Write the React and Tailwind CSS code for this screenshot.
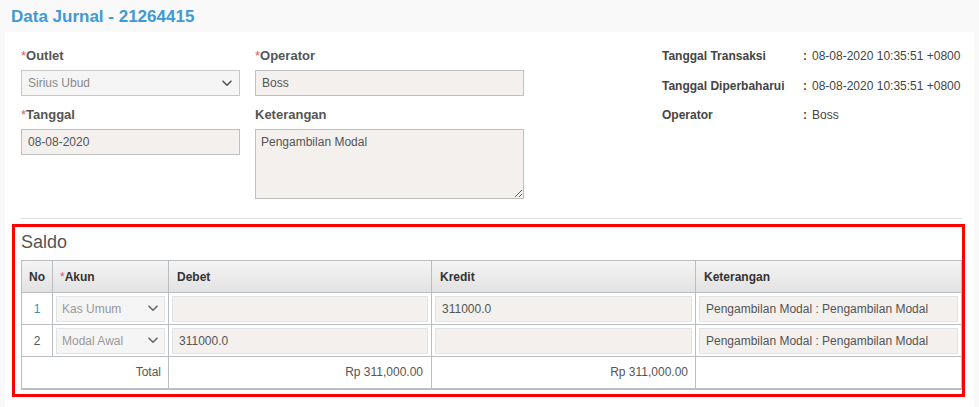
import React from "react";

const Chevron = ({ color = "#555" }) => (
  <svg width="10" height="7" viewBox="0 0 10 7" className="shrink-0">
    <path d="M1 1.2 L5 5.2 L9 1.2" fill="none" stroke={color} strokeWidth="1.6" strokeLinecap="round" strokeLinejoin="round" />
  </svg>
);

const Req = () => <span className="text-[#e05a5a] font-normal">*</span>;

function Label({ children }) {
  return <div className="h-[18px] leading-[18px] text-[13px] font-bold text-[#555] mb-[5px]">{children}</div>;
}

function TableSelect({ value }) {
  return (
    <div className="h-[26px] border border-[#e3e3e3] bg-[#f5f5f5] flex items-center justify-between pl-[5px] pr-[6px] text-[12px] text-[#999]">
      <span>{value}</span>
      <Chevron color="#666" />
    </div>
  );
}

function TableInput({ value }) {
  return (
    <div className="h-[26px] border border-[#e3e3e3] bg-[#f3f0ed] flex items-center px-[6px] text-[12px] text-[#555] whitespace-nowrap overflow-hidden">
      {value}
    </div>
  );
}

export default function App() {
  const rows = [
    { no: "1", noColor: "text-[#3b8ac4]", akun: "Kas Umum", debet: "", kredit: "311000.0" },
    { no: "2", noColor: "text-[#555]", akun: "Modal Awal", debet: "311000.0", kredit: "" },
  ];
  return (
    <div className="w-[979px] h-[407px] bg-[#f9f9f9] overflow-hidden" style={{ fontFamily: '"Liberation Sans", Arial, sans-serif' }}>
      <div className="h-[32px] pl-[11px] flex items-center">
        <h1 className="text-[17px] font-bold text-[#3d9ad6] leading-none pt-[1px]">Data Jurnal - 21264415</h1>
      </div>
      <div className="mx-[5px] bg-white h-[375px] pt-[15px]">
        <div className="flex pl-[16px]">
          <div className="w-[219px]">
            <Label><Req />Outlet</Label>
            <div className="h-[26px] border border-[#c8c8c8] bg-[#f5f5f5] flex items-center justify-between pl-[6px] pr-[7px] text-[12px] text-[#8a8a8a]">
              <span>Sirius Ubud</span>
              <Chevron color="#555" />
            </div>
            <div className="mt-[10px]">
              <Label><Req />Tanggal</Label>
              <div className="h-[26px] border border-[#c0c0c0] bg-[#f3f0ed] flex items-center px-[6px] text-[12px] text-[#555]">08-08-2020</div>
            </div>
          </div>
          <div className="w-[269px] ml-[15px]">
            <Label><Req />Operator</Label>
            <div className="h-[26px] border border-[#c0c0c0] bg-[#f3f0ed] flex items-center px-[6px] text-[12px] text-[#555]">Boss</div>
            <div className="mt-[10px]">
              <Label>Keterangan</Label>
              <textarea
                readOnly
                defaultValue="Pengambilan Modal"
                className="block w-[269px] h-[70px] border border-[#c0c0c0] bg-[#f3f0ed] px-[5px] py-[5px] text-[12px] leading-[15px] text-[#555] outline-none"
                style={{ fontFamily: '"Liberation Sans", Arial, sans-serif' }}
              />
            </div>
          </div>
          <div className="ml-[138px] text-[12px] text-[#444]">
            <div className="flex h-[18px] items-center">
              <div className="w-[141px] font-bold">Tanggal Transaksi</div>
              <div className="w-[9px] font-bold">:</div>
              <div>08-08-2020 10:35:51 +0800</div>
            </div>
            <div className="flex h-[18px] items-center mt-[12px]">
              <div className="w-[141px] font-bold">Tanggal Diperbaharui</div>
              <div className="w-[9px] font-bold">:</div>
              <div>08-08-2020 10:35:51 +0800</div>
            </div>
            <div className="flex h-[18px] items-center mt-[11px]">
              <div className="w-[141px] font-bold">Operator</div>
              <div className="w-[9px] font-bold">:</div>
              <div>Boss</div>
            </div>
          </div>
        </div>
        <div className="ml-[16px] w-[941px] h-px bg-[#dddddd] mt-[19px]" />
        <div className="ml-[7px] mt-[5px] w-[953px] border-[3px] border-[#ff0000] pl-[6px] pr-[1px] pb-[4px]">
          <div className="h-[33px] pt-[4px] text-[18px] leading-[22px] text-[#555]">Saldo</div>
          <table className="w-[940px] border-collapse table-fixed text-[12px] border-b-2 border-b-[#b9bec3]">
            <colgroup>
              <col className="w-[31px]" />
              <col className="w-[116px]" />
              <col className="w-[263px]" />
              <col className="w-[264px]" />
              <col className="w-[266px]" />
            </colgroup>
            <thead>
              <tr className="h-[32px] bg-gradient-to-b from-[#f4f4f4] to-[#e2e2e2] text-[#333] font-bold">
                <th className="border border-[#b9bec3] text-center font-bold">No</th>
                <th className="border border-[#b9bec3] text-left pl-[7px] font-bold"><Req />Akun</th>
                <th className="border border-[#b9bec3] text-left pl-[8px] font-bold">Debet</th>
                <th className="border border-[#b9bec3] text-left pl-[8px] font-bold">Kredit</th>
                <th className="border border-[#b9bec3] text-left pl-[8px] font-bold">Keterangan</th>
              </tr>
            </thead>
            <tbody>
              {rows.map((r) => (
                <tr key={r.no} className="h-[32px]">
                  <td className={`border border-[#b9bec3] text-center ${r.noColor}`}>{r.no}</td>
                  <td className="border border-[#b9bec3] px-[3px]"><TableSelect value={r.akun} /></td>
                  <td className="border border-[#b9bec3] px-[3px]"><TableInput value={r.debet} /></td>
                  <td className="border border-[#b9bec3] px-[3px]"><TableInput value={r.kredit} /></td>
                  <td className="border border-[#b9bec3] px-[3px]"><TableInput value="Pengambilan Modal : Pengambilan Modal" /></td>
                </tr>
              ))}
              <tr className="h-[32px] text-[#555]">
                <td colSpan={2} className="border border-[#b9bec3] text-right pr-[7px]">Total</td>
                <td className="border border-[#b9bec3] text-right pr-[8px]">Rp 311,000.00</td>
                <td className="border border-[#b9bec3] text-right pr-[7px]">Rp 311,000.00</td>
                <td className="border border-[#b9bec3]"></td>
              </tr>
            </tbody>
          </table>
        </div>
      </div>
    </div>
  );
}
